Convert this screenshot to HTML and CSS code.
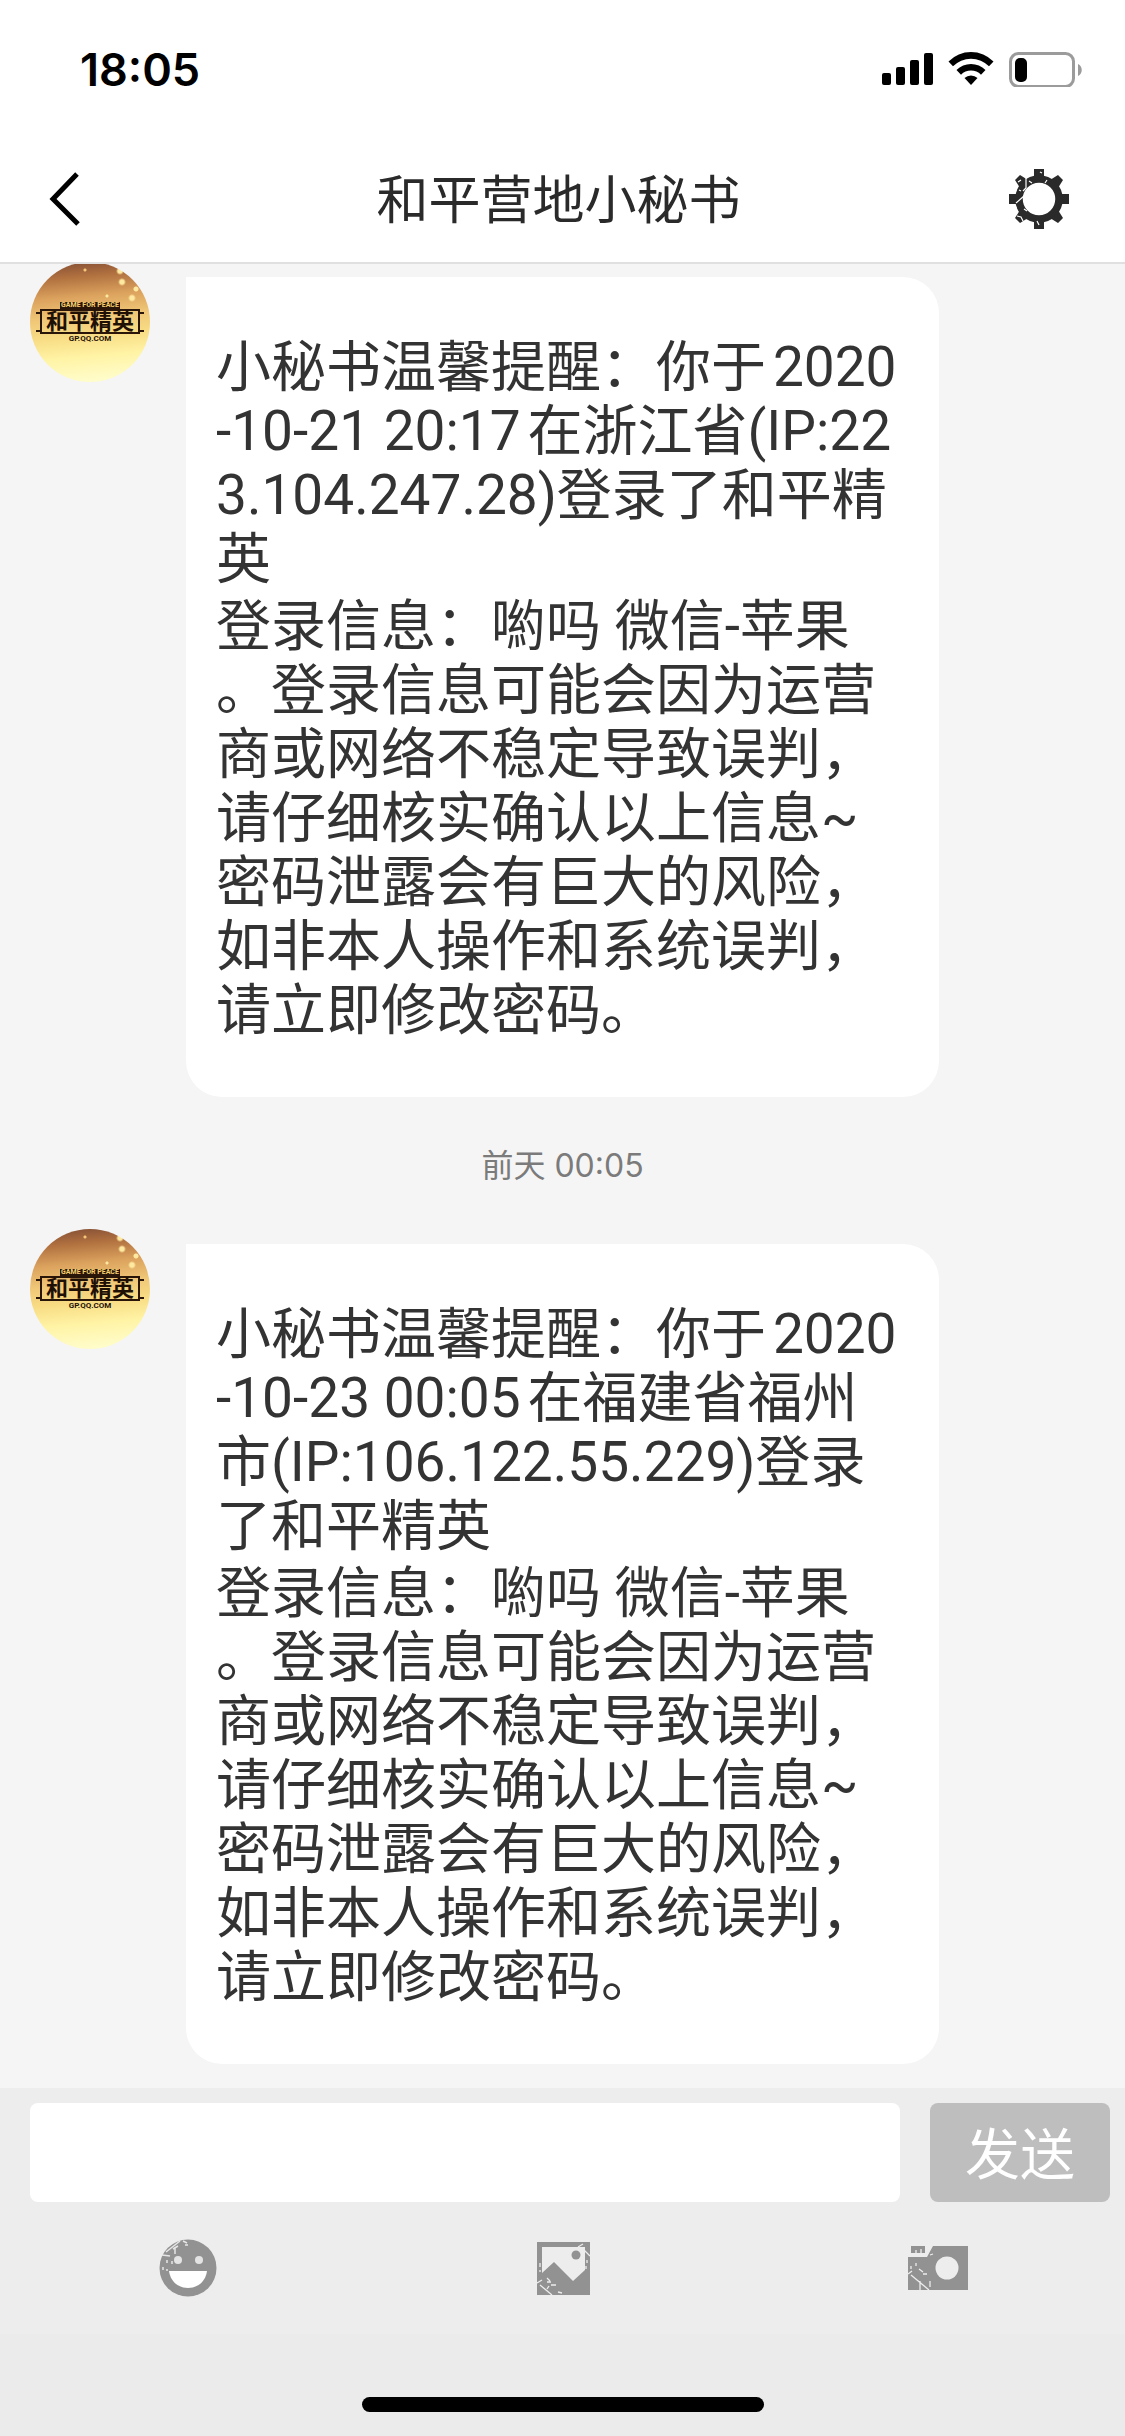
FILE: index.html
```
<!DOCTYPE html>
<html lang="zh-CN">
<head>
    <meta charset="UTF-8">
    <meta name="viewport" content="width=device-width, initial-scale=1.0">
    <title>和平营地小秘书</title>
    <link rel="stylesheet" href="styles.css">
</head>
<body>
    <div class="screen">
        <header class="top">
            <div class="status">
                <span class="clock">18:05</span>
                <svg class="status-icons" width="202" height="36" viewBox="0 0 202 36" aria-hidden="true">
                    <rect x="1" y="22" width="9" height="12" rx="2"/>
                    <rect x="15" y="16" width="9" height="18" rx="2"/>
                    <rect x="29" y="9" width="9" height="25" rx="2"/>
                    <rect x="43" y="2" width="9" height="32" rx="2"/>
                    <path d="M67.500 10.500a31.500 31.500 0 0 1 45 0l-4.500 4.800a25 25 0 0 0 -36 0z"/>
                    <path d="M75.500 19a20.500 20.500 0 0 1 29 0l-4.500 4.700a14 14 0 0 0 -20 0z"/>
                    <path d="M83.500 27a9.500 9.500 0 0 1 13 0l-6.500 7z"/>
                    <rect x="129.500" y="2.500" width="63" height="33" rx="8" fill="none" stroke="#9b9b9b" stroke-width="3"/>
                    <rect x="134" y="7" width="12" height="24" rx="5"/>
                    <path d="M197 13c5 2 5 10 0 12z" fill="#9b9b9b"/>
                </svg>
            </div>
            <nav class="nav">
                <button class="icon-btn" type="button" aria-label="返回">
                    <svg width="32" height="56" viewBox="0 0 32 56"><path d="M29 3L5 28l25 25" fill="none" stroke="#000" stroke-width="5"/></svg>
                </button>
                <h1 class="title">和平营地小秘书</h1>
                <button class="icon-btn" type="button" aria-label="设置">
                    <svg width="60" height="60" viewBox="0 0 60 60">
                        <g fill="#2a2a2a">
                            <path d="M25 0h10v8h-10zM25 52h10v8h-10zM0 25h8v10h-8zM52 25h8v10h-8z"/>
                            <path d="M11 6l8 5-8 8-5-8zM49 6l-8 5 8 8 5-8zM11 54l8-5-8-8-5 8zM49 54l-8-5 8-8 5 8z"/>
                        </g>
                        <circle cx="30" cy="30" r="20" fill="none" stroke="#2a2a2a" stroke-width="7.500"/>
                        <path d="M17 9v10l-3 3M7 34l8-7M9 13l3-2M10 21l2 1M8 47l4 1 2 4M15 40l3 2M20 12l3 2M28 52l2 4M36 14l2-3M31 3l2 1" fill="none" stroke="#fff" stroke-width="1.200"/>
                    </svg>
                </button>
            </nav>
        </header>

        <main class="chat">
            <article class="message">
                <div class="avatar">
                    <span class="logo-top">GAME FOR PEACE</span>
                    <span class="logo-name">和平精英</span>
                    <span class="logo-site">GP.QQ.COM</span>
                </div>
                <div class="bubble">
                    <p>小秘书温馨提醒：你于2020<br>-10-21 20:17在浙江省(IP:22<br>3.104.247.28)登录了和平精<br>英</p>
                    <p>登录信息：喲吗 微信-苹果<br>。登录信息可能会因为运营<br>商或网络不稳定导致误判，<br>请仔细核实确认以上信息~<br>密码泄露会有巨大的风险，<br>如非本人操作和系统误判，<br>请立即修改密码。</p>
                </div>
            </article>
            <time class="time">前天 00:05</time>
            <article class="message">
                <div class="avatar">
                    <span class="logo-top">GAME FOR PEACE</span>
                    <span class="logo-name">和平精英</span>
                    <span class="logo-site">GP.QQ.COM</span>
                </div>
                <div class="bubble">
                    <p>小秘书温馨提醒：你于2020<br>-10-23 00:05在福建省福州<br>市(IP:106.122.55.229)登录<br>了和平精英</p>
                    <p>登录信息：喲吗 微信-苹果<br>。登录信息可能会因为运营<br>商或网络不稳定导致误判，<br>请仔细核实确认以上信息~<br>密码泄露会有巨大的风险，<br>如非本人操作和系统误判，<br>请立即修改密码。</p>
                </div>
            </article>
        </main>

        <footer class="bottom">
            <form class="compose">
                <input class="field" type="text" aria-label="消息">
                <button class="send" type="button">发送</button>
            </form>
            <div class="tools">
                <button class="icon-btn" type="button" aria-label="表情">
                    <svg width="60" height="60" viewBox="0 0 60 60">
                        <circle cx="30" cy="30" r="28.500" fill="#929292"/>
                        <circle cx="20" cy="22" r="4" fill="#e4e4e4"/>
                        <circle cx="41" cy="22" r="4" fill="#e4e4e4"/>
                        <path d="M11 33h38c-1 9-8 17-19 17s-18-8-19-17z" fill="#fff"/>
                        <path d="M4 17l8 1M8 14l14-11M15 11l5-3M17 9v7M25 3l4 2M27 7h3M9 22v3M14 23v3M5 29v3M9 31v2" fill="none" stroke="#e6e6e6" stroke-width="1.500"/>
                    </svg>
                </button>
                <button class="icon-btn" type="button" aria-label="图片">
                    <svg width="60" height="60" viewBox="0 0 60 60">
                        <path d="M4 4h53v53h-53z" fill="#929292"/>
                        <path d="M9 9h43v23l-12 11-19-19-12 11z" fill="#ededed"/>
                        <circle cx="43" cy="17" r="4.500" fill="#929292"/>
                        <path d="M45 9l5-3M51 12l6 6M54 22v3M53 28v3M7 25v4M7 32v2M4 45l5-3M7 47l12 10M14 40l3 3M14 44h4M16 48l-2 3M18 47h5M25 54l4 1" fill="none" stroke="#ededed" stroke-width="1.300"/>
                    </svg>
                </button>
                <button class="icon-btn" type="button" aria-label="拍照">
                    <svg width="60" height="60" viewBox="0 0 60 60">
                        <path d="M25 8h35v44h-60v-33h19zM3 8h14v7h-14z" fill="#929292"/>
                        <circle cx="39" cy="30" r="11.500" fill="#ededed"/>
                        <path d="M0 36l4-3M3 37l18 15M12 43v9M8 25v3M3 28v3M11 31l4 3M15 36h4M22 43v6M8 12v3M13 11v4M22 17l3-1" fill="none" stroke="#ededed" stroke-width="1.300"/>
                    </svg>
                </button>
            </div>
            <div class="home"><span class="home-bar"></span></div>
        </footer>
    </div>
</body>
</html>
```
FILE: styles.css
```
* {
    box-sizing: border-box;
}
body {
    margin: 0;
    background: #f5f5f5;
    color: #333;
    font-family: Roboto, "Noto Sans CJK SC", sans-serif;
}
p, h1 {
    margin: 0;
}
button {
    padding: 0;
    border: 0;
    background: none;
    font-family: inherit;
}
.screen {
    display: flex;
    flex-direction: column;
    min-height: 100vh;
}

/* header */
.top {
    position: relative;
    z-index: 1;
    background: #fff;
    border-bottom: 2px solid #e0e0e0;
}
.status {
    display: flex;
    align-items: center;
    justify-content: space-between;
    height: 132px;
    padding: 6px 42px 0 80px;
}
.clock {
    font-family: Inter, sans-serif;
    font-size: 45px;
    font-weight: 600;
    color: #000;
}
.nav {
    display: flex;
    align-items: center;
    justify-content: space-between;
    height: 130px;
    padding: 3px 56px 0 48px;
}
.icon-btn {
    display: flex;
    justify-content: center;
    width: 60px;
}
.nav .icon-btn:first-child {
    justify-content: flex-start;
}
.title {
    padding-bottom: 4px;
    font-size: 52px;
    font-weight: 400;
    color: #2a2a2a;
}

/* messages */
.chat {
    display: flex;
    flex-direction: column;
    flex: 1;
    margin-top: -2px;
    padding-bottom: 24px;
}
.message {
    display: flex;
    align-items: flex-start;
    gap: 36px;
    padding: 0 186px 0 30px;
}
.bubble {
    flex: 1;
    margin-top: 15px;
    padding: 58px 0 55px 30px;
    border-radius: 0 36px 36px 36px;
    background: #fff;
    font-size: 55px;
    line-height: 64px;
    white-space: nowrap;
    text-autospace: normal;
}
.bubble p + p {
    margin-top: 3px;
}
.time {
    display: block;
    height: 132px;
    line-height: 138px;
    text-align: center;
    font-family: Inter, "Noto Sans CJK SC", sans-serif;
    font-size: 32px;
    color: #7b7b7b;
}

/* avatar with the game logo */
.avatar {
    display: flex;
    flex-direction: column;
    align-items: center;
    flex: none;
    width: 120px;
    height: 120px;
    padding-top: 40px;
    border-radius: 50%;
    background:
        radial-gradient(circle at 90px 9px, #ffe9a0 2px, transparent 4px),
        radial-gradient(circle at 92px 20px, #ffe9a0 2px, transparent 4px),
        radial-gradient(circle at 106px 27px, #ffe9a0 2px, transparent 3px),
        radial-gradient(circle at 102px 36px, #ffe9a0 2px, transparent 4px),
        radial-gradient(circle at 55px 8px, #f4c678 1px, transparent 2px),
        radial-gradient(circle at 77px 34px, #ffe9a0 1px, transparent 2px),
        linear-gradient(175deg, #7d4a34 0%, #b0703f 14%, #dca35e 30%, #f0c878 46%, #f8dc84 60%, #fff3a4 76%, #ffffd4 100%);
    color: #1f1006;
    font-weight: 700;
    white-space: nowrap;
}
.logo-top {
    width: 60px;
    height: 7px;
    background: #2a1608;
    color: #f6d070;
    font-size: 7px;
    line-height: 7px;
    text-align: center;
}
.logo-name {
    display: flex;
    align-items: center;
    justify-content: center;
    width: 100px;
    height: 25px;
    border: 2px solid #2a1608;
    font-size: 22px;
    line-height: 21px;
}
.logo-name::before, .logo-name::after {
    content: "";
    flex: none;
    width: 4px;
    height: 16px;
    margin: 0 auto 0 -6px;
    border: solid #2a1608;
    border-width: 2px 0;
}
.logo-name::after {
    margin: 0 -6px 0 auto;
}
.logo-site {
    font-size: 8px;
    line-height: 10px;
}

/* input area */
.bottom {
    background: #ededed;
}
.compose {
    display: flex;
    gap: 30px;
    padding: 15px 15px 0 30px;
}
.field {
    flex: 1;
    min-width: 0;
    height: 99px;
    padding: 0 20px;
    border: 0;
    border-radius: 8px;
    background: #fff;
    font-size: 52px;
}
.send {
    width: 180px;
    height: 99px;
    padding-bottom: 5px;
    border-radius: 8px;
    background: #bebebe;
    color: #fff;
    font-size: 55px;
}
.tools {
    display: grid;
    grid-template-columns: repeat(3, 1fr);
    justify-items: center;
    align-items: center;
    height: 132px;
}
.home {
    display: flex;
    align-items: flex-end;
    justify-content: center;
    height: 102px;
    padding-bottom: 24px;
    background: #ebebeb;
}
.home-bar {
    width: 402px;
    height: 15px;
    border-radius: 8px;
    background: #000;
}
```
